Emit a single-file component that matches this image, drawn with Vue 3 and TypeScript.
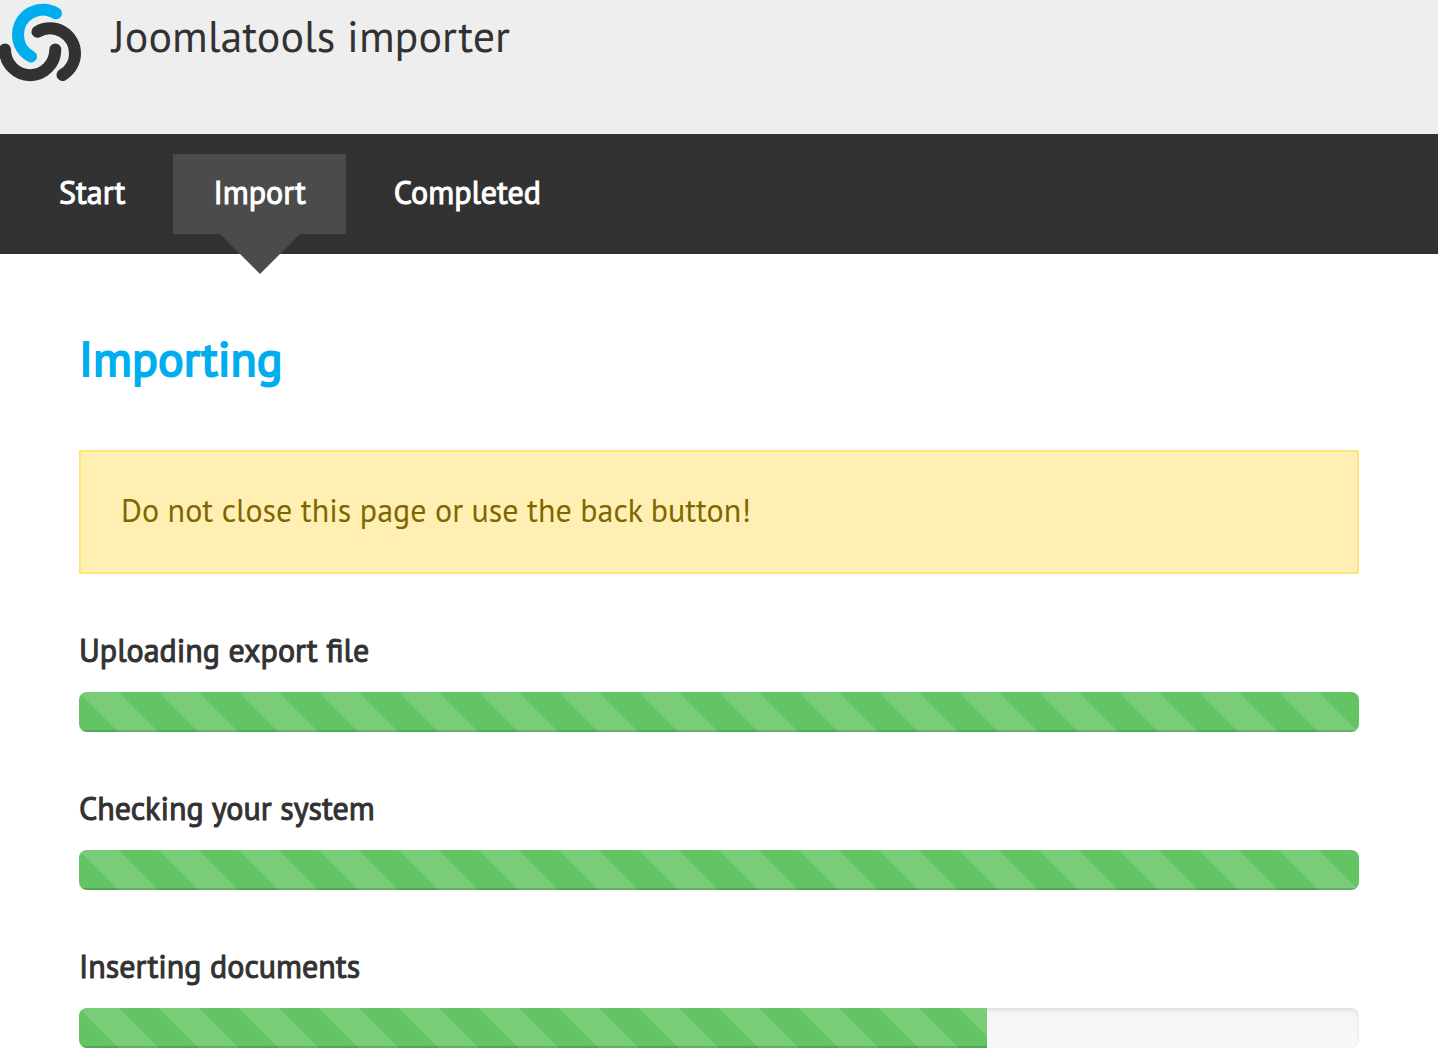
<script setup lang="ts">
interface Step {
  label: string
  active: boolean
}

interface Task {
  id: string
  label: string
  percent: number
}

const steps: Step[] = [
  { label: 'Start', active: false },
  { label: 'Import', active: true },
  { label: 'Completed', active: false },
]

const tasks: Task[] = [
  { id: 'upload', label: 'Uploading export file', percent: 100 },
  { id: 'check', label: 'Checking your system', percent: 100 },
  { id: 'documents', label: 'Inserting documents', percent: 70.9 },
]
</script>

<template>
  <div class="importer">
    <header class="masthead">
      <svg class="logo" width="84" height="84" viewBox="0 0 84 84" aria-hidden="true">
        <g fill="none" stroke-width="12" stroke-linecap="round">
          <path stroke="#00adef" d="M56 13.3A25 25 0 0 0 18 34.5C18 44 23 52.5 31 56.5" />
          <path stroke="#323232" d="M37.5 31.7A25 25 0 0 1 75 53.5C75 62.5 70 70.5 62.5 75" />
          <path stroke="#323232" d="M5 49.5A25 25.5 0 0 0 55.3 49.5" />
        </g>
      </svg>
      <div class="title">Joomlatools importer</div>
    </header>

    <nav class="steps" aria-label="Import steps">
      <ol>
        <li
          v-for="step in steps"
          :key="step.label"
          :class="{ active: step.active }"
          :aria-current="step.active ? 'step' : undefined"
        >
          {{ step.label }}
        </li>
      </ol>
    </nav>

    <main class="content">
      <h1>Importing</h1>
      <p class="alert" role="alert">Do not close this page or use the back button!</p>
      <section v-for="task in tasks" :key="task.id" class="task">
        <h2 :id="task.id">{{ task.label }}</h2>
        <div
          class="progress"
          role="progressbar"
          :aria-labelledby="task.id"
          :aria-valuenow="task.percent"
          aria-valuemin="0"
          aria-valuemax="100"
        >
          <div class="bar" :style="{ width: task.percent + '%' }"></div>
        </div>
      </section>
    </main>
  </div>
</template>

<style>
body {
  margin: 0;
  background: #fff;
}
</style>

<style scoped>
.importer {
  font-family: 'PT Sans', 'Noto Sans', sans-serif;
  font-size: 32px;
  line-height: 40px;
  color: #323232;
}

.masthead {
  display: flex;
  align-items: flex-start;
  gap: 28px;
  box-sizing: border-box;
  min-height: 134px;
  background: #eee;
}

.logo {
  flex: none;
}

.title {
  font-size: 44px;
  line-height: 72px;
}

.steps {
  padding: 20px 0;
  background: #323232;
}

.steps ol {
  display: flex;
  gap: 8px;
  max-width: 1400px;
  margin: 0 auto;
  padding: 0;
  list-style: none;
}

.steps li {
  position: relative;
  padding: 18px 40px 22px;
  color: #fff;
  -webkit-text-stroke: 1px;
}

.steps .active {
  background: #4b4b4b;
}

.steps .active::after {
  content: '';
  position: absolute;
  top: 100%;
  left: 50%;
  margin-left: -40px;
  border: 40px solid transparent;
  border-top-color: #4b4b4b;
  border-bottom-width: 0;
}

.content {
  max-width: 1280px;
  margin: 0 auto;
  padding: 74px 20px 11px;
}

h1 {
  margin: 0 0 62px;
  font-size: 48px;
  font-weight: 400;
  line-height: 60px;
  color: #00adef;
  -webkit-text-stroke: 2px;
}

.alert {
  margin: 0 0 56px;
  padding: 38px 40px 42px;
  border: 2px solid #ffe57d;
  background: #ffefb3;
  color: #806600;
}

.task + .task {
  margin-top: 56px;
}

h2 {
  margin: 0 0 22px;
  font-size: 32px;
  font-weight: 400;
  line-height: 40px;
  -webkit-text-stroke: 1px;
}

.progress {
  height: 40px;
  overflow: hidden;
  border-radius: 8px;
  background: linear-gradient(#f5f5f5, #f9f9f9);
  box-shadow: inset 0 2px 4px rgba(0, 0, 0, 0.1);
}

.bar {
  height: 100%;
  background-color: #62c462;
  background-image: linear-gradient(
    45deg,
    rgba(255, 255, 255, 0.15) 25%,
    transparent 25%,
    transparent 50%,
    rgba(255, 255, 255, 0.15) 50%,
    rgba(255, 255, 255, 0.15) 75%,
    transparent 75%
  );
  background-size: 80px 80px;
  box-shadow: inset 0 -2px 0 rgba(0, 0, 0, 0.15);
}
</style>
